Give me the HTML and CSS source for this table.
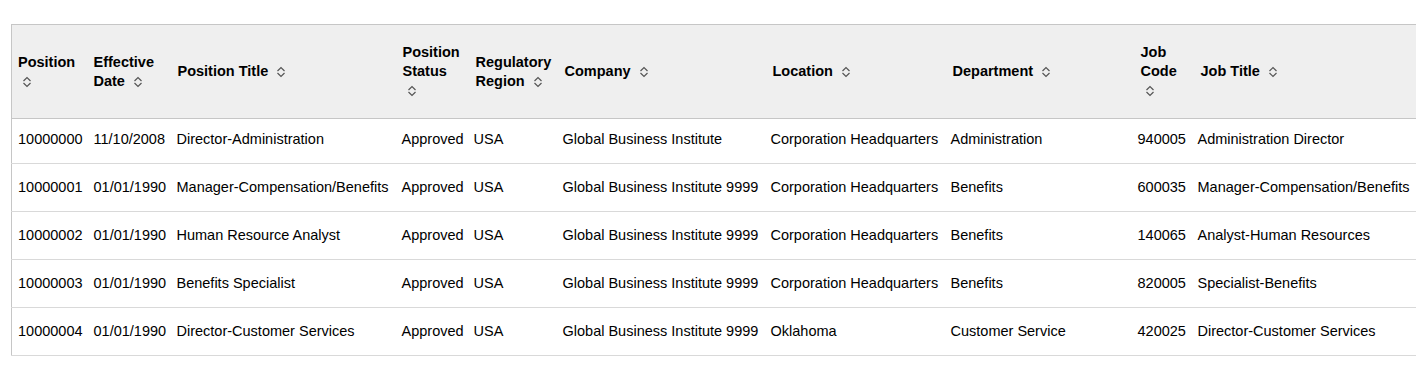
FILE: index.html
```html
<!DOCTYPE html>
<html>
<head>
<meta charset="utf-8">
<link rel="stylesheet" href="styles.css">
</head>
<body>
<div class="wrap">
<table class="grid">
<colgroup>
<col class="c1"><col class="c2"><col class="c3"><col class="c4"><col class="c5"><col class="c6"><col class="c7"><col class="c8"><col class="c9"><col class="c10">
</colgroup>
<thead>
<tr>
<th>Position <span class="sort"><svg viewBox="0 0 10 12" width="10" height="12"><path d="M1.5 5 L5 1.5 L8.5 5 M1.5 7 L5 10.5 L8.5 7"/></svg></span></th>
<th>Effective Date <span class="sort"><svg viewBox="0 0 10 12" width="10" height="12"><path d="M1.5 5 L5 1.5 L8.5 5 M1.5 7 L5 10.5 L8.5 7"/></svg></span></th>
<th class="off1">Position Title <span class="sort"><svg viewBox="0 0 10 12" width="10" height="12"><path d="M1.5 5 L5 1.5 L8.5 5 M1.5 7 L5 10.5 L8.5 7"/></svg></span></th>
<th class="off1 narrow">Position Status <span class="sort"><svg viewBox="0 0 10 12" width="10" height="12"><path d="M1.5 5 L5 1.5 L8.5 5 M1.5 7 L5 10.5 L8.5 7"/></svg></span></th>
<th class="off2">Regulatory Region <span class="sort"><svg viewBox="0 0 10 12" width="10" height="12"><path d="M1.5 5 L5 1.5 L8.5 5 M1.5 7 L5 10.5 L8.5 7"/></svg></span></th>
<th class="off2">Company <span class="sort"><svg viewBox="0 0 10 12" width="10" height="12"><path d="M1.5 5 L5 1.5 L8.5 5 M1.5 7 L5 10.5 L8.5 7"/></svg></span></th>
<th class="off2">Location <span class="sort"><svg viewBox="0 0 10 12" width="10" height="12"><path d="M1.5 5 L5 1.5 L8.5 5 M1.5 7 L5 10.5 L8.5 7"/></svg></span></th>
<th class="off2">Department <span class="sort"><svg viewBox="0 0 10 12" width="10" height="12"><path d="M1.5 5 L5 1.5 L8.5 5 M1.5 7 L5 10.5 L8.5 7"/></svg></span></th>
<th class="off3">Job Code <span class="sort"><svg viewBox="0 0 10 12" width="10" height="12"><path d="M1.5 5 L5 1.5 L8.5 5 M1.5 7 L5 10.5 L8.5 7"/></svg></span></th>
<th class="off3">Job Title <span class="sort"><svg viewBox="0 0 10 12" width="10" height="12"><path d="M1.5 5 L5 1.5 L8.5 5 M1.5 7 L5 10.5 L8.5 7"/></svg></span></th>
</tr>
</thead>
<tbody>
<tr><td>10000000</td><td>11/10/2008</td><td>Director-Administration</td><td>Approved</td><td>USA</td><td>Global Business Institute</td><td>Corporation Headquarters</td><td>Administration</td><td>940005</td><td>Administration Director</td></tr>
<tr><td>10000001</td><td>01/01/1990</td><td>Manager-Compensation/Benefits</td><td>Approved</td><td>USA</td><td>Global Business Institute 9999</td><td>Corporation Headquarters</td><td>Benefits</td><td>600035</td><td>Manager-Compensation/Benefits</td></tr>
<tr><td>10000002</td><td>01/01/1990</td><td>Human Resource Analyst</td><td>Approved</td><td>USA</td><td>Global Business Institute 9999</td><td>Corporation Headquarters</td><td>Benefits</td><td>140065</td><td>Analyst-Human Resources</td></tr>
<tr><td>10000003</td><td>01/01/1990</td><td>Benefits Specialist</td><td>Approved</td><td>USA</td><td>Global Business Institute 9999</td><td>Corporation Headquarters</td><td>Benefits</td><td>820005</td><td>Specialist-Benefits</td></tr>
<tr><td>10000004</td><td>01/01/1990</td><td>Director-Customer Services</td><td>Approved</td><td>USA</td><td>Global Business Institute 9999</td><td>Oklahoma</td><td>Customer Service</td><td>420025</td><td>Director-Customer Services</td></tr>
</tbody>
</table>
</div>
</body>
</html>
```
FILE: styles.css
```css
html, body {
  margin: 0;
  padding: 0;
  overflow: hidden;
  background: #fff;
}
body {
  font-family: "Liberation Sans", Arial, sans-serif;
  font-size: 14.5px;
  color: #000;
}
.wrap {
  padding: 24px 0 0 11px;
}
.grid {
  border-collapse: collapse;
  table-layout: fixed;
  width: 1540px;
  border-top: 1px solid #c6c6c6;
  border-left: 1px solid #c6c6c6;
}
.c1 { width: 76px; }
.c2 { width: 83px; }
.c3 { width: 225px; }
.c4 { width: 72px; }
.c5 { width: 89px; }
.c6 { width: 208px; }
.c7 { width: 180px; }
.c8 { width: 187px; }
.c9 { width: 60px; }
.c10 { width: 360px; }
.grid th {
  background: #efefef;
  font-weight: bold;
  text-align: left;
  vertical-align: middle;
  line-height: 19px;
  padding: 0 3px 0 6px;
  height: 93px;
  border-bottom: 1px solid #c6c6c6;
}
.grid th.off1 { padding-left: 7px; }
.grid th.off2 { padding-left: 8px; padding-right: 2px; }
.grid th.off3 { padding-left: 9px; }
.grid th.narrow { padding-right: 6px; }
.grid td {
  padding: 0 6px 1px 6px;
  height: 46px;
  line-height: 16px;
  vertical-align: middle;
  white-space: nowrap;
  border-bottom: 1px solid #d9d9d9;
}
.grid tbody tr:first-child td {
  padding-bottom: 5px;
  height: 39px;
}
.sort {
  display: inline-block;
  vertical-align: middle;
  margin-left: 4px;
  line-height: 0;
}
.sort svg {
  fill: none;
  stroke: #555;
  stroke-width: 1.2;
}
```
